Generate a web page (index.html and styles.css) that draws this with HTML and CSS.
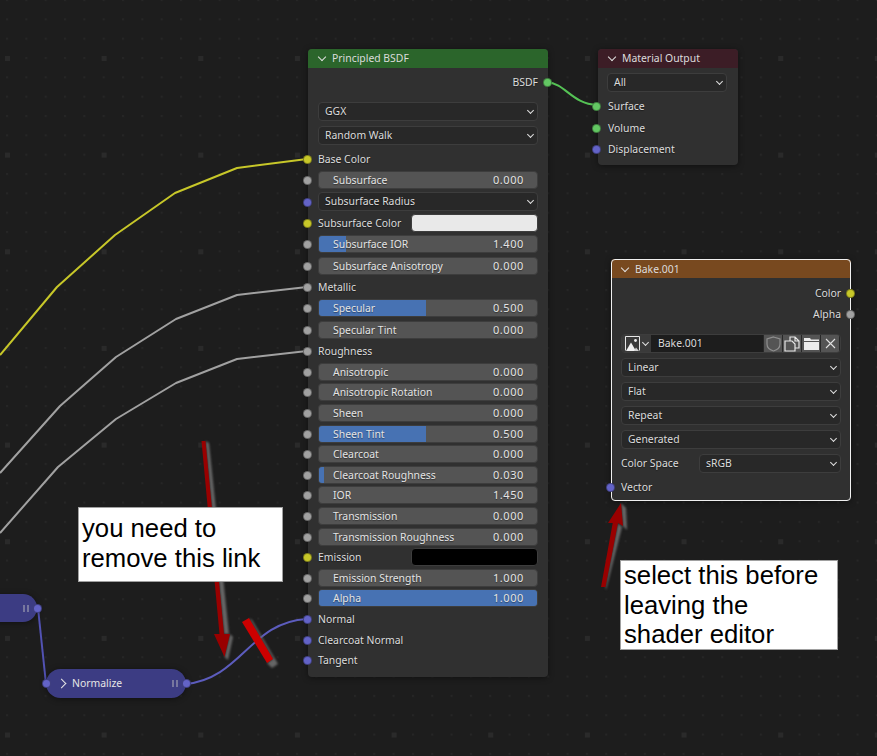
FILE: index.html
```html
<!DOCTYPE html>
<html lang="en">
<head>
    <meta charset="UTF-8">
    <title>Shader editor</title>
    <link rel="stylesheet" href="styles.css">
</head>

<body>
<div class="canvas">

    <!-- grid and wires sit under the nodes -->
    <svg class="layer" width="877" height="756">
        <defs>
            <pattern id="grid-small" x="6" y="-1" width="19.33" height="19.33" patternUnits="userSpaceOnUse">
                <rect width="2" height="2" fill="#262626"/>
            </pattern>
            <pattern id="grid-big" x="5" y="56" width="96.65" height="96.65" patternUnits="userSpaceOnUse">
                <rect width="5" height="5" fill="#2a2a2a"/>
            </pattern>
        </defs>
        <rect width="877" height="756" fill="url(#grid-small)"/>
        <rect width="877" height="756" fill="url(#grid-big)"/>

        <g fill="none" stroke-width="2" stroke-linejoin="round">
            <polyline stroke="#c7c729" points="0,355 57,287 115,235 175,193 237,168 307,159"/>
            <polyline stroke="#a1a1a1" points="0,473 60,406 116,357 176,319 237,295 307,287"/>
            <polyline stroke="#a1a1a1" points="0,533 58,467 116,419 176,383 237,359 307,351"/>
            <path stroke="#55c255" d="M547 82 C566 84 572 104 597 105"/>
            <path stroke="#5c5cbd" d="M186 684 C242 678 250 622 307 619"/>
            <path stroke="#5252b3" d="M38 608 L46 684"/>
        </g>
    </svg>

    <!-- Principled BSDF -->
    <div class="node node-bsdf">
        <div class="node-head head-green"><span class="chevron-down"></span>Principled BSDF</div>
        <div class="node-body body-bsdf">
            <div class="row row-out">BSDF<i class="socket out green"></i></div>
            <div class="row-gap"></div>
            <div class="row row-wide"><div class="select">GGX</div></div>
            <div class="row row-wide"><div class="select">Random Walk</div></div>

            <div class="group-top">
                <div class="row"><i class="socket yellow"></i>Base Color</div>
                <div class="row"><i class="socket grey"></i><div class="slider"><span>Subsurface</span><span class="value">0.000</span></div></div>
                <div class="row"><i class="socket blue"></i><div class="select">Subsurface Radius</div></div>
                <div class="row"><i class="socket yellow"></i><span class="color-label">Subsurface Color</span><div class="swatch swatch-white"></div></div>
                <div class="row"><i class="socket grey"></i><div class="slider"><b style="width: 12.5%"></b><span>Subsurface IOR</span><span class="value">1.400</span></div></div>
                <div class="row"><i class="socket grey"></i><div class="slider"><span>Subsurface Anisotropy</span><span class="value">0.000</span></div></div>
                <div class="row"><i class="socket grey"></i>Metallic</div>
                <div class="row"><i class="socket grey"></i><div class="slider"><b style="width: 49%"></b><span>Specular</span><span class="value">0.500</span></div></div>
                <div class="row"><i class="socket grey"></i><div class="slider"><span>Specular Tint</span><span class="value">0.000</span></div></div>
                <div class="row"><i class="socket grey"></i>Roughness</div>
            </div>

            <div class="group-bottom">
                <div class="row"><i class="socket grey"></i><div class="slider"><span>Anisotropic</span><span class="value">0.000</span></div></div>
                <div class="row"><i class="socket grey"></i><div class="slider"><span>Anisotropic Rotation</span><span class="value">0.000</span></div></div>
                <div class="row"><i class="socket grey"></i><div class="slider"><span>Sheen</span><span class="value">0.000</span></div></div>
                <div class="row"><i class="socket grey"></i><div class="slider"><b style="width: 49%"></b><span>Sheen Tint</span><span class="value">0.500</span></div></div>
                <div class="row"><i class="socket grey"></i><div class="slider"><span>Clearcoat</span><span class="value">0.000</span></div></div>
                <div class="row"><i class="socket grey"></i><div class="slider"><b style="width: 2.5%"></b><span>Clearcoat Roughness</span><span class="value">0.030</span></div></div>
                <div class="row"><i class="socket grey"></i><div class="slider"><span>IOR</span><span class="value">1.450</span></div></div>
                <div class="row"><i class="socket grey"></i><div class="slider"><span>Transmission</span><span class="value">0.000</span></div></div>
                <div class="row"><i class="socket grey"></i><div class="slider"><span>Transmission Roughness</span><span class="value">0.000</span></div></div>
                <div class="row"><i class="socket yellow"></i><span class="color-label">Emission</span><div class="swatch swatch-black"></div></div>
                <div class="row"><i class="socket grey"></i><div class="slider"><span>Emission Strength</span><span class="value">1.000</span></div></div>
                <div class="row"><i class="socket grey"></i><div class="slider"><b style="width: 100%"></b><span>Alpha</span><span class="value">1.000</span></div></div>
                <div class="row"><i class="socket blue"></i>Normal</div>
                <div class="row"><i class="socket blue"></i>Clearcoat Normal</div>
                <div class="row"><i class="socket blue"></i>Tangent</div>
            </div>
        </div>
    </div>

    <!-- Material Output -->
    <div class="node node-output">
        <div class="node-head head-maroon"><span class="chevron-down"></span>Material Output</div>
        <div class="node-body body-output">
            <div class="row row-wide"><div class="select">All</div></div>
            <div class="group-top">
                <div class="row"><i class="socket green"></i>Surface</div>
                <div class="row"><i class="socket green"></i>Volume</div>
                <div class="row"><i class="socket blue"></i>Displacement</div>
            </div>
        </div>
    </div>

    <!-- Bake.001 image texture -->
    <div class="node node-bake">
        <div class="node-head head-orange"><span class="chevron-down"></span>Bake.001</div>
        <div class="node-body body-bake">
            <div class="group-top">
                <div class="row row-out">Color<i class="socket out yellow"></i></div>
                <div class="row row-out">Alpha<i class="socket out grey"></i></div>
            </div>
            <div class="row row-wide row-image">
                <div class="image-row">
                    <div class="image-pick">
                        <svg width="15" height="15" viewBox="0 0 15 15">
                            <path d="M0.5 14.500 V0.500 H14.500 V14.500" fill="none" stroke="#e6e6e6" stroke-width="1"/>
                            <path d="M1 15 L6 6.500 L11 15 Z" fill="#f0f0f0"/>
                            <path d="M9 15 L11 11.500 L14 15 Z" fill="#d0d0d0"/>
                            <circle cx="10.500" cy="4.500" r="1.400" fill="#f0f0f0"/>
                        </svg>
                        <span class="chevron-small"></span>
                    </div>
                    <div class="image-name">Bake.001</div>
                    <div class="image-btn">
                        <svg width="15" height="16" viewBox="0 0 15 16"><path d="M7.500 1 L14 3 V8 C14 11.500 11 14 7.500 15 C4 14 1 11.500 1 8 V3 Z" fill="none" stroke="#8f8f8f" stroke-width="1.200"/></svg>
                    </div>
                    <div class="image-btn">
                        <svg width="16" height="16" viewBox="0 0 16 16"><path d="M6 5 V1 H11 L15 5 V12 H11 M11 1 V5 H15 M1 5 H8 L11 8 V15 H1 Z" fill="none" stroke="#e6e6e6" stroke-width="1.200"/></svg>
                    </div>
                    <div class="image-btn">
                        <svg width="15" height="14" viewBox="0 0 15 14"><path d="M0 1 H6 L7 2.500 H15 V4 H0 Z M0 5 H15 V13 H0 Z" fill="#ececec"/></svg>
                    </div>
                    <div class="image-btn">
                        <svg width="11" height="11" viewBox="0 0 11 11"><path d="M1 1 L10 10 M10 1 L1 10" stroke="#e0e0e0" stroke-width="1.100"/></svg>
                    </div>
                </div>
            </div>
            <div class="row row-wide"><div class="select">Linear</div></div>
            <div class="row row-wide"><div class="select">Flat</div></div>
            <div class="row row-wide"><div class="select">Repeat</div></div>
            <div class="row row-wide"><div class="select">Generated</div></div>
            <div class="row row-wide"><span class="space-label">Color Space</span><div class="select">sRGB</div></div>
            <div class="group-top">
                <div class="row"><i class="socket blue"></i>Vector</div>
            </div>
        </div>
    </div>

    <!-- collapsed group nodes -->
    <div class="pill pill-cut"><span class="pause"></span><i class="socket out blue"></i></div>
    <div class="pill pill-normalize">
        <i class="socket blue"></i>
        <span class="chevron-right"></span>
        <span class="pill-name">Normalize</span>
        <span class="pause"></span>
        <i class="socket out blue"></i>
    </div>

    <!-- hand drawn marks over the screenshot -->
    <svg class="layer" width="877" height="756">
        <g class="mark-shadow" fill="#666666">
            <path d="M205.500 441 L209 443 L229 634 L224 634 Z"/>
            <path d="M230 634 L233 637 L228 660 L224.500 657 Z"/>
            <path d="M249 618 L252 620 L278 664 L272 668 L267 663 L273 659 Z"/>
            <path d="M618 523 L622 527 L606 590 L605.500 587 Z"/>
            <path d="M621 503 L626 508 L627 530 L623 526 Z"/>
        </g>
        <path d="M201.500 441 L205.500 441 L224 634 L230 634 L224.500 657 L214 634 L219.500 634 Z" fill="#990000"/>
        <path d="M242 622 L249 618 L273 659 L267 663 Z" fill="#cc0000"/>
        <path d="M605.500 587 L601 587 L612.700 523 L608 523 L621 503 L623 526 L618 523 Z" fill="#990000"/>
    </svg>

    <div class="note note-link">you need to<br>remove this link</div>
    <div class="note note-select">select this before<br>leaving the<br>shader editor</div>
</div>
</body>
</html>
```

FILE: styles.css
```css
* {
    box-sizing: border-box;
}

body {
    margin: 0;
    background-color: #1d1d1d;
    font-family: "Noto Sans", sans-serif;
    font-size: 10.4px;
    color: #dcdcdc;
}

.canvas {
    position: relative;
    width: 877px;
    height: 756px;
    overflow: hidden;
}

.layer {
    position: absolute;
    left: 0;
    top: 0;
}

.mark-shadow {
    filter: blur(0.8px);
}

/* nodes */

.node {
    position: absolute;
    background-color: #303030;
    border-radius: 4px;
    box-shadow: 0 1px 6px rgba(0, 0, 0, 0.45);
}

.node-bsdf {
    left: 308px;
    top: 49px;
    width: 240px;
    height: 628px;
}

.node-output {
    left: 598px;
    top: 49px;
    width: 140px;
    height: 116px;
}

.node-bake {
    left: 611px;
    top: 259px;
    width: 240px;
    height: 242px;
    outline: 1px solid #f0f0f0;
    outline-offset: -1px;
}

.node-head {
    display: flex;
    align-items: center;
    height: 19px;
    padding: 0 0 1px 11px;
    border-radius: 4px 4px 0 0;
    color: #dcdcdc;
}

.head-green {
    background-color: #2b652b;
}

.head-maroon {
    background-color: #3c1d26;
}

.head-orange {
    padding-top: 1px;
    padding-bottom: 0;
    background-color: #78491f;
}

.node-body {
    padding: 3.500px 10px 5px;
}

.body-output {
    padding: 2.500px 11px 5px 9px;
}

.body-output .group-top .row {
    padding-left: 1px;
}

.body-bake {
    padding: 5px 10px 0;
}

.chevron-down {
    width: 6px;
    height: 6px;
    margin: -3px 7px 0 0;
    border-right: 1px solid #e0e0e0;
    border-bottom: 1px solid #e0e0e0;
    transform: rotate(45deg);
}

.chevron-right {
    width: 7px;
    height: 7px;
    margin-right: 7px;
    border-right: 1px solid #e6e6e6;
    border-top: 1px solid #e6e6e6;
    transform: rotate(45deg);
}

/* rows */

.row {
    position: relative;
    display: flex;
    align-items: center;
    height: 21.33px;
    padding-bottom: 1px;
    white-space: nowrap;
    text-shadow: 0 1px 1px rgba(0, 0, 0, 0.4);
}

.row-out {
    justify-content: flex-end;
}

.row-wide {
    height: 24px;
    padding-bottom: 0;
}

.row-gap {
    height: 6.670px;
}

.row-image {
    margin-top: 6px;
}

.group-bottom .row {
    height: 20.600px;
}

.group-top {
    margin-top: 1.330px;
}

.body-output .group-top {
    margin-top: 1.830px;
}

.body-bake .group-top:first-child {
    margin-top: 0;
}

/* sockets */

.socket {
    position: absolute;
    left: -15px;
    top: 50%;
    width: 9px;
    height: 9px;
    margin-top: -4.500px;
    border-radius: 50%;
    border: 1px solid rgba(0, 0, 0, 0.35);
}

.socket.out {
    left: auto;
    right: -14px;
}

.yellow {
    background-color: #c7c729;
}

.grey {
    background-color: #a1a1a1;
}

.blue {
    background-color: #6363c7;
}

.green {
    background-color: #63c763;
}

/* widgets */

.select {
    position: relative;
    flex: 1;
    height: 19px;
    padding-left: 6px;
    line-height: 16px;
    background-color: #282828;
    border: 1px solid #3d3d3d;
    border-radius: 4px;
    color: #dcdcdc;
}

.select::after {
    content: "";
    position: absolute;
    right: 4px;
    top: 5px;
    width: 4px;
    height: 4px;
    border-right: 1px solid #e0e0e0;
    border-bottom: 1px solid #e0e0e0;
    transform: rotate(45deg);
}

.slider {
    position: relative;
    flex: 1;
    display: flex;
    justify-content: space-between;
    height: 18px;
    padding: 0 13px 0 14px;
    line-height: 17px;
    background-color: #545454;
    border: 1px solid #3d3d3d;
    border-radius: 4px;
    color: #e4e4e4;
    overflow: hidden;
}

.slider b {
    position: absolute;
    left: 0;
    top: 0;
    bottom: 0;
    background-color: #4772b3;
}

.slider span {
    position: relative;
}

.slider .value {
    font-size: 11px;
    line-height: 15px;
    letter-spacing: 0.6px;
}

.color-label {
    width: 92.500px;
}

.swatch {
    flex: 1;
    height: 18px;
    border-radius: 4px;
    border: 1px solid #3d3d3d;
}

.swatch-white {
    background-color: #e9e9e9;
}

.swatch-black {
    background-color: #000000;
}

.space-label {
    width: 78px;
    margin-bottom: 1px;
}

/* image datablock row */

.image-row {
    flex: 1;
    display: flex;
    height: 19px;
    background-color: #282828;
    border: 1px solid #3d3d3d;
    border-radius: 4px;
    overflow: hidden;
}

.image-pick {
    display: flex;
    align-items: center;
    gap: 3px;
    width: 29px;
    padding-left: 3px;
    background-color: #3a3a3a;
}

.chevron-small {
    width: 5px;
    height: 5px;
    margin: -3px 0 0 0;
    border-right: 1px solid #e0e0e0;
    border-bottom: 1px solid #e0e0e0;
    transform: rotate(45deg);
}

.image-name {
    width: 112px;
    padding-left: 7px;
    line-height: 16px;
    background-color: #1d1d1d;
}

.image-btn {
    display: flex;
    align-items: center;
    justify-content: center;
    width: 18px;
    margin-left: 1px;
    background-color: #545454;
}

/* collapsed nodes */

.pill {
    position: absolute;
    display: flex;
    align-items: center;
    background-color: #3c3c83;
    box-shadow: 0 1px 6px rgba(0, 0, 0, 0.45);
    color: #e6e6e6;
}

.pill .socket {
    left: -4px;
}

.pill .socket.out {
    left: auto;
    right: -5px;
}

.pill-cut {
    left: -60px;
    top: 594px;
    width: 97px;
    height: 28px;
    padding-right: 8px;
    justify-content: flex-end;
    border-radius: 14px;
}

.pill-normalize {
    left: 46px;
    top: 669px;
    width: 140px;
    height: 29px;
    padding: 0 8px 0 12px;
    border-radius: 14.500px;
}

.pill-name {
    flex: 1;
    margin-bottom: 1px;
}

.pause {
    width: 6px;
    height: 7px;
    border-left: 2px solid #77779f;
    border-right: 2px solid #77779f;
}

/* annotation boxes */

.note {
    position: absolute;
    padding-left: 3px;
    background-color: #ffffff;
    border: 1px solid #a0a0a0;
    color: #000000;
    font-family: "Liberation Sans", Arial, sans-serif;
    font-size: 25.700px;
    line-height: 29.500px;
}

.note-link {
    left: 78px;
    top: 507px;
    width: 205px;
    height: 75px;
    padding-top: 6px;
}

.note-select {
    left: 620px;
    top: 560px;
    width: 218px;
    height: 90px;
    padding-top: 0;
}
```
